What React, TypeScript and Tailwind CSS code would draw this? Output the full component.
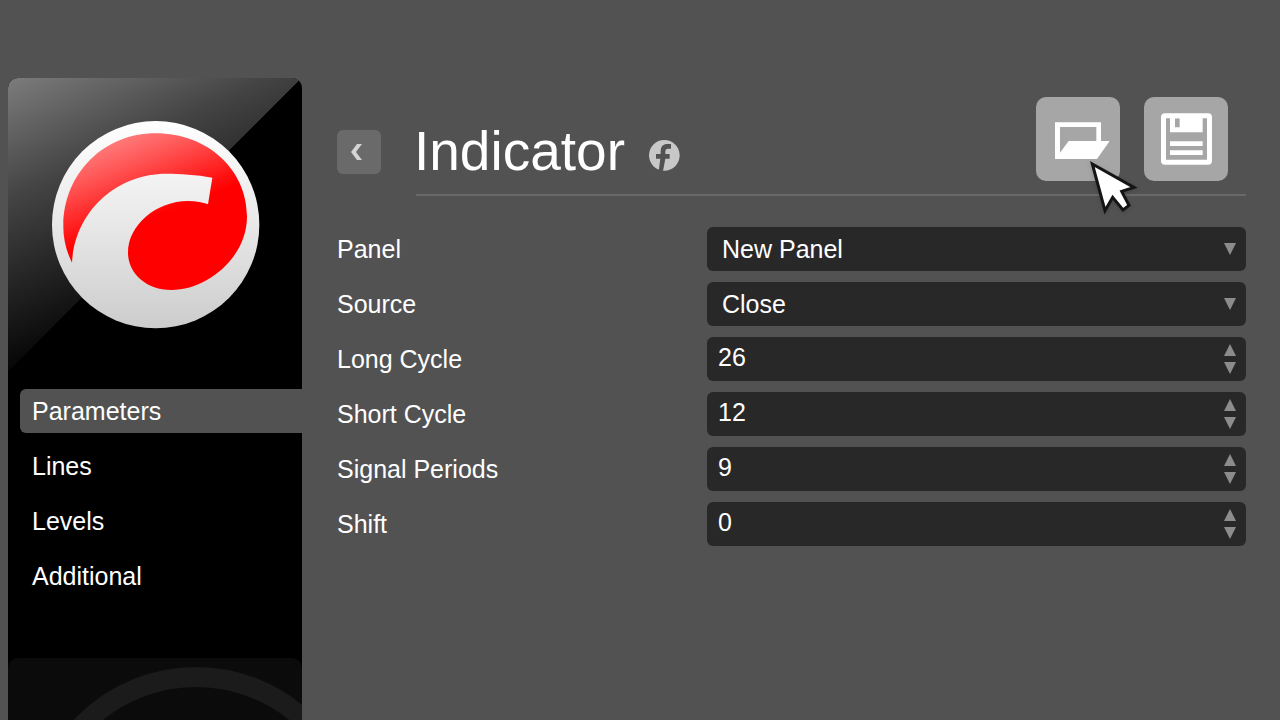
import { useState } from "react";

const TABS = ["Parameters", "Lines", "Levels", "Additional"];

const SELECTS = [
  { id: "panel", label: "Panel", options: ["New Panel", "Chart"] },
  { id: "source", label: "Source", options: ["Close", "Open", "High", "Low"] },
];

const NUMBERS = [
  { id: "longCycle", label: "Long Cycle", initial: 26 },
  { id: "shortCycle", label: "Short Cycle", initial: 12 },
  { id: "signalPeriods", label: "Signal Periods", initial: 9 },
  { id: "shift", label: "Shift", initial: 0 },
];

function Logo() {
  return (
    <svg className="w-[208px] h-[208px] overflow-visible" viewBox="154 153 624 624" role="img" aria-label="Logo">
      <defs>
        <linearGradient id="disc" x1="0" y1="0" x2="0" y2="1">
          <stop offset="0" stopColor="#ffffff" />
          <stop offset="0.5" stopColor="#e8e8e8" />
          <stop offset="1" stopColor="#cccccc" />
        </linearGradient>
        <linearGradient id="gloss" gradientUnits="userSpaceOnUse" x1="340" y1="200" x2="440" y2="450">
          <stop offset="0" stopColor="#ff8080" />
          <stop offset="0.35" stopColor="#ff5656" />
          <stop offset="1" stopColor="#ff0000" />
        </linearGradient>
      </defs>
      <circle cx="468" cy="464" r="311" fill="url(#disc)" />
      <path
        fill="url(#gloss)"
        d="M217 578C198 540 190 500 191 465C193 312 310 190 468 190C625 190 742 300 742 440C742 560 625 660 515 660C440 660 385 610 385 548C385 465 470 393 565 393C590 393 610 397 625 403L638 323C590 314 540 311 500 311C350 311 225 425 217 578Z"
      />
    </svg>
  );
}

function FolderIcon() {
  return (
    <svg className="w-full h-full" viewBox="48 51 252 252" fill="white" aria-hidden="true">
      <path fillRule="evenodd" d="M105 127H243V183H269L231 237H105ZM120 141V218L146 183H229V141Z" />
    </svg>
  );
}

function SaveIcon() {
  return (
    <svg className="w-full h-full" viewBox="372 51 252 252" fill="white" aria-hidden="true">
      <path
        fillRule="evenodd"
        d="M435 100H564A12 12 0 0 1 576 112V242A12 12 0 0 1 564 254H435A12 12 0 0 1 423 242V112A12 12 0 0 1 435 100ZM438 115V239H561V115Z"
      />
      <path fillRule="evenodd" d="M450 112H548V157H450ZM465 115V142H479V115Z" />
      <path d="M450 184H548V198H450ZM450 211H548V225H450Z" />
    </svg>
  );
}

function Cursor() {
  return (
    <svg
      className="absolute left-[52px] top-[62px] w-[52px] h-[58px] pointer-events-none drop-shadow-sm"
      viewBox="204 237 156 174"
      aria-hidden="true"
    >
      <path
        d="M217 252L342 322L305 334L327 376L309 390L278 352L255 392Z"
        fill="white"
        stroke="#141414"
        strokeWidth="9"
      />
    </svg>
  );
}

function Triangle({ up = false }: { up?: boolean }) {
  return (
    <svg className="w-3 h-3" viewBox="0 0 12 12" fill="#8c8c8c" aria-hidden="true">
      <path d={up ? "M6 0L12 12H0Z" : "M0 0H12L6 12Z"} />
    </svg>
  );
}

export default function App() {
  const [tab, setTab] = useState("Parameters");
  const [values, setValues] = useState<Record<string, number>>(
    Object.fromEntries(NUMBERS.map((n) => [n.id, n.initial]))
  );

  const setValue = (id: string, value: number) => setValues((v) => ({ ...v, [id]: value }));

  return (
    <div className="min-h-screen bg-[#525252] pt-[78px] pl-2 flex text-white text-[25px] leading-8 font-['Liberation_Sans',Arial,sans-serif]">
      {/* Sidebar */}
      <aside className="w-[294px] shrink-0 bg-black rounded-t-[10px] overflow-hidden flex flex-col">
        <div className="aspect-square flex items-center justify-center bg-[linear-gradient(135deg,transparent_50%,#000_50%),linear-gradient(155deg,#7c7c7c_0%,#444_28%,#222_50%,#000_72%)]">
          <Logo />
        </div>

        <nav className="flex flex-col gap-[11px] pt-[17px] pb-[60px] pl-3">
          {TABS.map((name) => (
            <button
              key={name}
              type="button"
              onClick={() => setTab(name)}
              className={`h-11 pl-3 text-left rounded-l-md ${tab === name ? "bg-[#525252]" : ""}`}
            >
              {name}
            </button>
          ))}
        </nav>

        <div className="flex-1 bg-[#0b0b0b] rounded-t-[10px]">
          <svg className="w-full" viewBox="0 0 294 62" aria-hidden="true">
            <circle cx="188" cy="177" r="158" fill="none" stroke="#1b1b1b" strokeWidth="20" />
          </svg>
        </div>
      </aside>

      <main className="flex-1 min-w-0 pt-[19px] pl-[35px] pr-[34px]">
        {/* Title bar */}
        <header className="flex">
          <button
            type="button"
            aria-label="Back"
            className="w-11 h-11 mt-[33px] mr-[33px] shrink-0 bg-[#6a6a6a] rounded-md flex items-center justify-center"
          >
            <svg className="w-11 h-11" viewBox="0 0 44 44" aria-hidden="true">
              <path d="M20 14H25L19 22L25 30H20L14 22Z" fill="#d4d4d4" />
            </svg>
          </button>

          <div className="flex-1">
            <div className="h-[97px] flex justify-between">
              <div className="pt-3 flex items-center gap-6">
                <h1 className="text-[55px] leading-none">Indicator</h1>
                <a href="#facebook" aria-label="Facebook" className="pt-2">
                  <svg className="w-[31px] h-[31px]" viewBox="0 0 93 93" aria-hidden="true">
                    <circle cx="46" cy="46" r="46" fill="#c8c8c8" />
                    <path
                      d="M29 93L34 56H21V42H35V34C35 18 43 12 55 12H66V26H58C51 26 49 29 49 35V42H62V56H49L42 93Z"
                      fill="#525252"
                    />
                  </svg>
                </a>
              </div>

              <div className="flex items-start gap-6 pr-[18px]">
                <div className="relative">
                  <button type="button" aria-label="Open" className="block w-[84px] h-[84px] bg-[#a6a6a6] rounded-[10px]">
                    <FolderIcon />
                  </button>
                  <Cursor />
                </div>
                <button type="button" aria-label="Save" className="w-[84px] h-[84px] bg-[#a6a6a6] rounded-[10px]">
                  <SaveIcon />
                </button>
              </div>
            </div>
            <hr className="ml-0.5 border-t-2 border-[#696969]" />
          </div>
        </header>

        {/* Parameters form */}
        <form className="mt-[31px] flex flex-col gap-[11px]" onSubmit={(e) => e.preventDefault()}>
          {SELECTS.map((field) => (
            <div key={field.id} className="flex items-center">
              <label htmlFor={field.id} className="w-[370px] shrink-0">
                {field.label}
              </label>
              <div className="relative flex-1">
                <select
                  id={field.id}
                  className="block w-full h-11 pl-[15px] pr-10 appearance-none bg-[#282828] rounded-md"
                >
                  {field.options.map((option) => (
                    <option key={option}>{option}</option>
                  ))}
                </select>
                <span className="absolute inset-y-0 right-[10px] flex items-center pointer-events-none">
                  <Triangle />
                </span>
              </div>
            </div>
          ))}

          {NUMBERS.map((field) => (
            <div key={field.id} className="flex items-center">
              <label htmlFor={field.id} className="w-[370px] shrink-0">
                {field.label}
              </label>
              <div className="flex-1 h-11 flex bg-[#282828] rounded-md">
                <input
                  id={field.id}
                  type="number"
                  value={values[field.id]}
                  onChange={(e) => setValue(field.id, Number(e.target.value))}
                  className="flex-1 min-w-0 pl-[11px] pb-1 bg-transparent outline-none [appearance:textfield] [&::-webkit-inner-spin-button]:appearance-none"
                />
                <div className="w-8 py-1 flex flex-col">
                  <button
                    type="button"
                    aria-label={`Increase ${field.label}`}
                    onClick={() => setValue(field.id, values[field.id] + 1)}
                    className="flex-1 flex items-center justify-center"
                  >
                    <Triangle up />
                  </button>
                  <button
                    type="button"
                    aria-label={`Decrease ${field.label}`}
                    onClick={() => setValue(field.id, values[field.id] - 1)}
                    className="flex-1 flex items-center justify-center"
                  >
                    <Triangle />
                  </button>
                </div>
              </div>
            </div>
          ))}
        </form>
      </main>
    </div>
  );
}
